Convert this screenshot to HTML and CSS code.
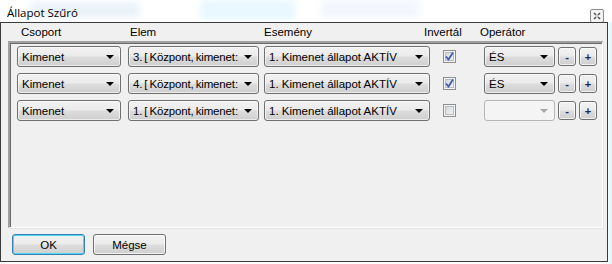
FILE: index.html
```html
<!DOCTYPE html>
<html>
<head>
<meta charset="utf-8">
<link rel="stylesheet" href="styles.css">
</head>
<body>
<div class="screen">
  <div class="titlebar">
    <div class="blur b1"></div>
    <div class="blur b2"></div>
    <div class="blur b3"></div>
    <span class="title">Állapot Szűró</span>
    <span class="close">
      <svg width="14" height="14" viewBox="0 0 14 14">
        <rect x="0.5" y="0.5" width="13" height="13" rx="1.5" fill="#f4f4f4" stroke="#8a8a8a"/>
        <path d="M4 4 L10 10 M10 4 L4 10" stroke="#555" stroke-width="1.6"/>
        <path d="M5 7 H9 M7 5 V9" stroke="#f4f4f4" stroke-width="1"/>
      </svg>
    </span>
  </div>
  <div class="window">
    <div class="header">
      <span class="h h1">Csoport</span>
      <span class="h h2">Elem</span>
      <span class="h h3">Esemény</span>
      <span class="h h4">Invertál</span>
      <span class="h h5">Operátor</span>
    </div>
    <div class="panel">
      <div class="row">
        <div class="combo c1"><span class="txt">Kimenet</span><span class="arrow"></span></div>
        <div class="combo c2"><span class="txt">3. [ Központ, kimenet: 3 ]</span><span class="arrow"></span></div>
        <div class="combo c3"><span class="txt">1. Kimenet állapot AKTÍV</span><span class="arrow"></span></div>
        <div class="check on"><svg width="9" height="9" viewBox="0 0 9 9"><path d="M1 4.5 L3.5 7.5 L8 0.5" fill="none" stroke="#3d5ea8" stroke-width="1.8"/></svg></div>
        <div class="combo c4"><span class="txt">ÉS</span><span class="arrow"></span></div>
        <div class="small">-</div>
        <div class="small">+</div>
      </div>
      <div class="row">
        <div class="combo c1"><span class="txt">Kimenet</span><span class="arrow"></span></div>
        <div class="combo c2"><span class="txt">4. [ Központ, kimenet: 4 ]</span><span class="arrow"></span></div>
        <div class="combo c3"><span class="txt">1. Kimenet állapot AKTÍV</span><span class="arrow"></span></div>
        <div class="check on"><svg width="9" height="9" viewBox="0 0 9 9"><path d="M1 4.5 L3.5 7.5 L8 0.5" fill="none" stroke="#3d5ea8" stroke-width="1.8"/></svg></div>
        <div class="combo c4"><span class="txt">ÉS</span><span class="arrow"></span></div>
        <div class="small">-</div>
        <div class="small">+</div>
      </div>
      <div class="row">
        <div class="combo c1"><span class="txt">Kimenet</span><span class="arrow"></span></div>
        <div class="combo c2"><span class="txt">1. [ Központ, kimenet: 1 ]</span><span class="arrow"></span></div>
        <div class="combo c3"><span class="txt">1. Kimenet állapot AKTÍV</span><span class="arrow"></span></div>
        <div class="check"></div>
        <div class="combo c4 disabled"><span class="txt"></span><span class="arrow"></span></div>
        <div class="small">-</div>
        <div class="small">+</div>
      </div>
    </div>
    <div class="buttons">
      <div class="btn default">OK</div>
      <div class="btn">Mégse</div>
    </div>
  </div>
</div>
</body>
</html>
```
FILE: styles.css
```css
html, body {
  margin: 0;
  padding: 0;
}
body {
  width: 612px;
  height: 264px;
  overflow: hidden;
  background: #ffffff;
  font-family: "Liberation Sans", Arial, sans-serif;
  font-size: 11.5px;
  color: #000;
}
.screen {
  width: 612px;
  height: 264px;
  background: linear-gradient(90deg, #fbfdfe 0%, #fbfdfe 99%, #e2f5fb 100%);
}
.titlebar {
  position: relative;
  height: 22px;
  display: flex;
  align-items: center;
  justify-content: space-between;
  background: #ffffff;
  overflow: hidden;
}
.blur {
  position: absolute;
  filter: blur(3px);
  border-radius: 4px;
}
.b1 { left: 30px; top: 2px; width: 110px; height: 16px; background: rgba(190, 215, 240, 0.3); }
.b2 { left: 200px; top: 0; width: 95px; height: 20px; background: rgba(205, 240, 252, 0.45); }
.b3 { left: 320px; top: 0; width: 100px; height: 18px; background: rgba(215, 230, 250, 0.3); }
.title {
  position: relative;
  margin-left: 7px;
  margin-top: 3px;
  font-family: "Open Sans", "Noto Sans", sans-serif;
  font-size: 11.5px;
  color: #000;
}
.close {
  position: relative;
  margin-right: 8px;
  margin-top: 10px;
  display: flex;
}
.window {
  width: 606px;
  height: 238px;
  border: 1px solid #3b3b3b;
  background: #f0f0f0;
  display: flex;
  flex-direction: column;
}
.header {
  height: 18px;
  display: flex;
  align-items: center;
}
.h { display: block; }
.h1 { margin-left: 20px; width: 109px; }
.h2 { width: 134px; }
.h3 { width: 160px; }
.h4 { width: 56px; }
.panel {
  margin-left: 7px;
  width: 592px;
  height: 181px;
  border-top: 2px solid #a0a0a0;
  border-left: 2px solid #a0a0a0;
  border-right: 1px solid #ffffff;
  border-bottom: 1px solid #ffffff;
  box-shadow: inset 1px 1px 0 #696969, 1px 1px 0 #e3e3e3;
  padding-top: 3px;
  display: flex;
  flex-direction: column;
  gap: 6px;
}
.row {
  display: flex;
  align-items: center;
  height: 21px;
  padding-left: 7px;
}
.combo {
  box-sizing: border-box;
  height: 21px;
  border: 1px solid #707070;
  border-radius: 3px;
  background: linear-gradient(#f2f2f2 0%, #ebebeb 48%, #dddddd 52%, #cfcfcf 100%);
  box-shadow: inset 0 0 0 1px rgba(255,255,255,0.6);
  display: flex;
  align-items: center;
  overflow: hidden;
}
.combo .txt {
  flex: 1;
  padding-left: 4px;
  white-space: nowrap;
  overflow: hidden;
}
.combo .arrow {
  flex: none;
  width: 0;
  height: 0;
  border-left: 4px solid transparent;
  border-right: 4px solid transparent;
  border-top: 4px solid #000;
  margin: 1px 6px 0 4px;
}
.c1 { width: 104px; margin-right: 7px; }
.c2 { width: 131px; margin-right: 5px; }
.c2 .txt { word-spacing: -1px; letter-spacing: -0.15px; }
.c3 { width: 166px; margin-right: 13px; }
.c4 { width: 71px; margin-right: 3px; }
.combo.disabled {
  border-color: #b6b6b6;
  background: #f4f4f4;
  box-shadow: none;
}
.combo.disabled .arrow { border-top-color: #a6a6a6; }
.check {
  box-sizing: border-box;
  width: 13px;
  height: 13px;
  border: 1px solid #8e8f8f;
  background: linear-gradient(135deg, #d0d3d8 0%, #e8e9eb 60%, #f6f6f6 100%);
  box-shadow: inset 0 0 0 1px #f4f4f4, inset 0 0 0 2px #b8bdc5;
  margin-right: 28px;
  display: flex;
  align-items: center;
  justify-content: center;
}
.small {
  box-sizing: border-box;
  width: 18px;
  height: 19px;
  border: 1px solid #707070;
  border-radius: 3px;
  background: linear-gradient(#f2f2f2 0%, #ebebeb 48%, #dddddd 52%, #cfcfcf 100%);
  box-shadow: inset 0 0 0 1px rgba(255,255,255,0.7);
  margin-right: 3px;
  display: flex;
  align-items: center;
  justify-content: center;
  font-weight: bold;
  color: #1c2a55;
  font-size: 11px;
}
.buttons {
  display: flex;
  gap: 8px;
  padding: 6px 0 0 11px;
}
.btn {
  box-sizing: border-box;
  width: 73px;
  height: 21px;
  border: 1px solid #707070;
  border-radius: 3px;
  background: linear-gradient(#f2f2f2 0%, #ebebeb 48%, #dddddd 52%, #cfcfcf 100%);
  box-shadow: inset 0 0 0 1px rgba(255,255,255,0.7);
  display: flex;
  align-items: center;
  justify-content: center;
}
.btn.default {
  border-color: #3c7fb1;
  box-shadow: inset 0 0 0 1px #48d8fb;
}
```
